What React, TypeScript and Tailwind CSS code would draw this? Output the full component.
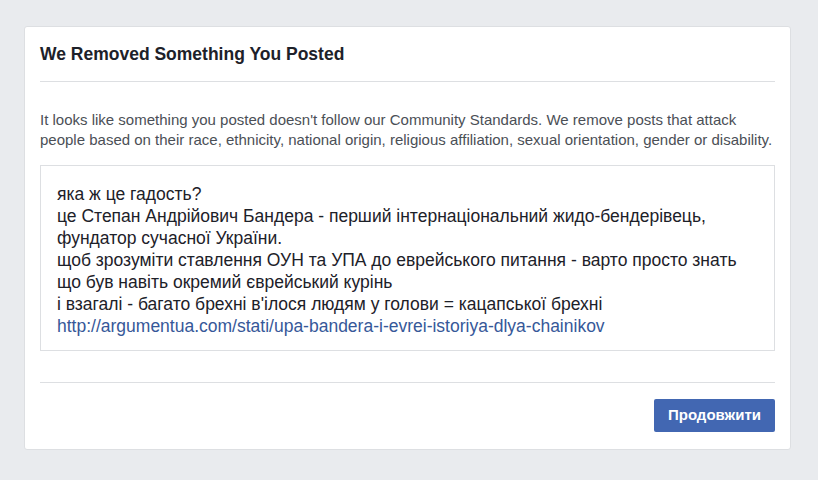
export default function App() {
	const lines = [
		"яка ж це гадость?",
		"це Степан Андрійович Бандера - перший інтернаціональний жидо-бендерівець,",
		"фундатор сучасної України.",
		"щоб зрозуміти ставлення ОУН та УПА до еврейського питання - варто просто знать",
		"що був навіть окремий єврейський курінь",
		"і взагалі - багато брехні в'ілося людям у голови = кацапської брехні",
	];

	return (
		<div className="min-h-[480px] w-[818px] bg-[#e9ebee] pt-[26px] pl-[24px] font-['Liberation_Sans',Arial,sans-serif]">
			<div className="w-[767px] h-[424px] bg-white border border-[#dddfe2] rounded-[3px] flex flex-col">
				<div className="mx-[15px] h-[55px] flex items-center border-b border-[#dddfe2]">
					<h1 className="text-[17.5px] font-bold text-[#1d2129] leading-5">
						We Removed Something You Posted
					</h1>
				</div>

				<div className="px-[15px] pt-[28px]">
					<p className="text-[15px] leading-[20px] text-[#4b4f56]">
						It looks like something you posted doesn't follow our Community Standards. We remove posts that attack
						people based on their race, ethnicity, national origin, religious affiliation, sexual orientation, gender or disability.
					</p>

					<div className="mt-[15px] h-[186px] border border-[#dddfe2] px-4 pt-[17px] text-[17.5px] leading-[22px] text-[#1d2129]">
						{lines.map((line, i) => (
							<div key={i}>{line}</div>
						))}
						<a href="#" className="text-[#365899]">
							http://argumentua.com/stati/upa-bandera-i-evrei-istoriya-dlya-chainikov
						</a>
					</div>
				</div>

				<div className="mx-[15px] mt-[31px] border-t border-[#dddfe2] pt-4 flex justify-end">
					<button className="h-[33px] px-[14px] bg-[#4267b2] rounded-[2px] text-white text-[15px] font-bold">
						Продовжити
					</button>
				</div>
			</div>
		</div>
	);
}
